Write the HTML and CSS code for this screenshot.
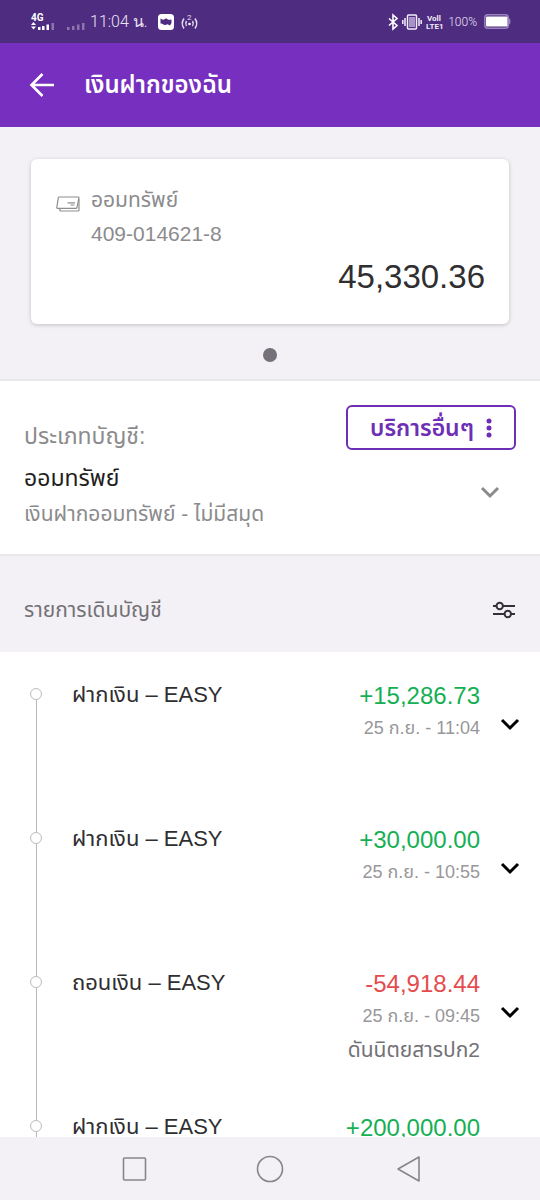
FILE: index.html
```html
<!DOCTYPE html>
<html lang="th">
<head>
<meta charset="utf-8">
<meta name="viewport" content="width=device-width, initial-scale=1">
<title>เงินฝากของฉัน</title>
<link rel="stylesheet" href="styles.css">
</head>
<body>
<div class="screen">
  <div class="status-bar">
    <div class="status-group">
      <svg class="icon" width="24" height="18" viewBox="0 0 24 18" fill="#fff">
        <text x="0" y="8" class="tiny-bold">4G</text>
        <path d="M0 12l2.500-3 2.500 3zM0 13.500l2.500 3 2.500-3z"/>
        <path d="M7 14h2.500v3H7zM11 13h2.500v4H11zM15.500 11.500H18V17h-2.500z"/>
        <path d="M20.500 10H23v7h-2.500z" opacity=".35"/>
      </svg>
      <svg class="icon signal-off" width="18" height="18" viewBox="0 0 18 18" fill="#fff" opacity=".35">
        <path d="M0 14h2.500v3H0zM5 13h2.500v4H5zM10 11.500h2.500V17H10zM15 10h2.500v7H15z"/>
      </svg>
      <span class="clock">11:04 น.</span>
      <svg class="icon" width="16" height="16" viewBox="0 0 16 16">
        <rect width="16" height="16" rx="3.500" fill="#fff"/>
        <path d="M2.500 4.500l2 1q1 .5 2-.3 1.500-1.200 3 0 1.500 1 4 .3v3.500l-1.500 2.500-2-1q-1-.5-2 .2-1.500.8-3-.5-1-1-2.500-.7z" fill="#4e2c80"/>
      </svg>
      <svg class="icon" width="17" height="18" viewBox="0 0 17 18" fill="none" stroke="#e4dcee" stroke-width="1.500">
        <path d="M3 5.500Q-.5 10.500 3 15.500M5.500 8Q4 10.500 5.500 13M14 5.500q3.500 5 0 10M11.500 8Q13 10.500 11.500 13"/>
        <circle cx="8.500" cy="11" r="1.300" fill="#fff" stroke="none"/>
        <text x="6" y="7" class="tiny">2</text>
      </svg>
    </div>
    <div class="status-group status-right">
      <svg class="icon" width="10" height="16" viewBox="0 0 10 16" fill="none" stroke="#fff" stroke-width="1.600">
        <path d="M1 4.500l8 7-4 3.500V1l4 3.500-8 7"/>
      </svg>
      <svg class="icon" width="20" height="16" viewBox="0 0 20 16" fill="none" stroke="#f4effa" stroke-width="1.500">
        <rect x="5.500" y="1" width="9" height="14" rx="1"/>
        <path d="M7 3h6v10H7z" fill="#a893c6" stroke="none"/>
        <path d="M3 4v8M.8 6v4M17 4v8M19.200 6v4"/>
      </svg>
      <svg class="icon" width="18" height="18" viewBox="0 0 18 18" fill="#f1ecf7">
        <text x="1" y="8" class="lte">Voll</text>
        <text x="0" y="16" class="lte">LTE1</text>
      </svg>
      <span class="percent">100%</span>
      <svg class="icon battery" width="27" height="15" viewBox="0 0 27 15">
        <rect x=".8" y=".8" width="23.500" height="13.400" rx="3" fill="none" stroke="#9a84bb" stroke-width="1.500"/>
        <rect x="2" y="2.500" width="21.500" height="10" rx="1" fill="#fff"/>
        <path d="M25 4.500q1.500 0 1.500 3t-1.500 3z" fill="#9a84bb"/>
      </svg>
    </div>
  </div>

  <header class="app-bar">
    <button class="icon-button" aria-label="กลับ">
      <svg width="26" height="26" viewBox="0 0 26 26" fill="none" stroke="#fff" stroke-width="2.600"><path d="M25 13H2.500M13.500 2L2.500 13l11 11"/></svg>
    </button>
    <h1 class="app-title">เงินฝากของฉัน</h1>
  </header>

  <section class="carousel">
    <article class="card">
      <svg class="card-icon" width="24" height="16" viewBox="0 0 24 16" fill="none" stroke="#8e8e90" stroke-width="1.200" stroke-linejoin="round">
        <path d="M3 1h19.200q.8 0 .7.800L21 11.500q-.2.800-1 .8H1.500q-.8 0-.7-.8L2.300 1.800Q2.400 1 3 1z"/>
        <path d="M3.500 12.500l.8 2.500H22q1 0 1-1V3M11.500 6.800h7.500M14.500 9h4"/>
      </svg>
      <div class="card-info">
        <div class="card-name">ออมทรัพย์</div>
        <div class="card-number">409-014621-8</div>
      </div>
      <div class="card-balance">45,330.36</div>
    </article>
    <span class="page-dot"></span>
  </section>

  <section class="account">
    <div class="account-head">
      <span class="account-label" id="type-label">ประเภทบัญชี:</span>
      <button class="services">
        <span>บริการอื่นๆ</span>
        <svg width="6" height="20" viewBox="0 0 6 20" fill="#6d2fb5"><circle cx="3" cy="3" r="2.500"/><circle cx="3" cy="10" r="2.500"/><circle cx="3" cy="17" r="2.500"/></svg>
      </button>
    </div>
    <button class="account-select" aria-labelledby="type-label type-value">
      <span class="account-text" id="type-value">
        <span class="account-value">ออมทรัพย์</span>
        <span class="account-detail">เงินฝากออมทรัพย์ - ไม่มีสมุด</span>
      </span>
      <svg class="account-chevron" width="20" height="14" viewBox="0 0 20 14" fill="none" stroke="#8b8b8d" stroke-width="3"><path d="M2 3l8 8 8-8"/></svg>
    </button>
  </section>

  <div class="list-head">
    <h2 class="list-title">รายการเดินบัญชี</h2>
    <button class="icon-button" aria-label="ตัวกรอง">
      <svg width="24" height="18" viewBox="0 0 24 18" fill="none" stroke="#343138" stroke-width="2"><path d="M1 5h3.500M11 5h12M1 13h11.500M19 13h4"/><circle cx="7.700" cy="5" r="3.200"/><circle cx="15.800" cy="13" r="3.200"/></svg>
    </button>
  </div>

  <ol class="transactions">
    <li class="row">
      <span class="marker"></span>
      <span class="row-title">ฝากเงิน – EASY</span>
      <div class="row-data">
        <span class="amount credit">+15,286.73</span>
        <time class="date">25 ก.ย. - 11:04</time>
      </div>
      <button class="icon-button expand" aria-label="รายละเอียด"><svg width="20" height="14" viewBox="0 0 20 14" fill="none" stroke="#000" stroke-width="3"><path d="M2 3l8 8 8-8"/></svg></button>
    </li>
    <li class="row">
      <span class="marker"></span>
      <span class="row-title">ฝากเงิน – EASY</span>
      <div class="row-data">
        <span class="amount credit">+30,000.00</span>
        <time class="date">25 ก.ย. - 10:55</time>
      </div>
      <button class="icon-button expand" aria-label="รายละเอียด"><svg width="20" height="14" viewBox="0 0 20 14" fill="none" stroke="#000" stroke-width="3"><path d="M2 3l8 8 8-8"/></svg></button>
    </li>
    <li class="row">
      <span class="marker"></span>
      <span class="row-title">ถอนเงิน – EASY</span>
      <div class="row-data">
        <span class="amount debit">-54,918.44</span>
        <time class="date">25 ก.ย. - 09:45</time>
        <span class="note">ดันนิตยสารปก2</span>
      </div>
      <button class="icon-button expand" aria-label="รายละเอียด"><svg width="20" height="14" viewBox="0 0 20 14" fill="none" stroke="#000" stroke-width="3"><path d="M2 3l8 8 8-8"/></svg></button>
    </li>
    <li class="row">
      <span class="marker"></span>
      <span class="row-title">ฝากเงิน – EASY</span>
      <div class="row-data">
        <span class="amount credit">+200,000.00</span>
      </div>
    </li>
  </ol>

  <nav class="system-nav">
    <button class="icon-button" aria-label="แอปล่าสุด"><svg width="28" height="28" viewBox="0 0 28 28" fill="none" stroke="#87858a" stroke-width="1.600"><rect x="3.500" y="3" width="22" height="22" rx="1"/></svg></button>
    <button class="icon-button" aria-label="หน้าหลัก"><svg width="28" height="28" viewBox="0 0 28 28" fill="none" stroke="#87858a" stroke-width="1.600"><circle cx="14" cy="14" r="12.500"/></svg></button>
    <button class="icon-button" aria-label="ย้อนกลับ"><svg width="28" height="28" viewBox="0 0 28 28" fill="none" stroke="#87858a" stroke-width="1.600" stroke-linejoin="round"><path d="M27 2v24L6 14z"/></svg></button>
  </nav>
</div>
</body>
</html>
```

FILE: styles.css
```css
* {
  box-sizing: border-box;
}

body {
  margin: 0;
  background: #fff;
  color: #2f2e31;
  font-family: "Liberation Sans", "Noto Sans Thai", sans-serif;
}

h1,
h2,
ol {
  margin: 0;
  padding: 0;
  font-weight: normal;
}

button {
  margin: 0;
  padding: 0;
  border: 0;
  background: none;
  color: inherit;
  font: inherit;
}

svg {
  display: block;
  flex: none;
  overflow: visible;
}

.screen {
  display: flex;
  flex-direction: column;
  height: 100vh;
  overflow: hidden;
}

.icon-button {
  display: flex;
  align-items: center;
  justify-content: center;
}

/* Status bar */
.status-bar {
  display: flex;
  flex: none;
  align-items: center;
  justify-content: space-between;
  height: 43px;
  padding: 0 29px 0 31px;
  background: #4e2c80;
  color: #e9e2f3;
  font-family: Roboto, "Liberation Sans", sans-serif;
  line-height: 24px;
}

.status-group {
  display: flex;
  align-items: center;
}

.status-right {
  gap: 4px;
}

.signal-off {
  margin-left: 12px;
}

.clock {
  margin: 0 10px 0 5px;
  font-size: 16px;
  font-weight: 300;
  white-space: nowrap;
}

.clock + .icon {
  margin: 0 7px 0 -9px;
  margin-left: 0;
}

.percent {
  margin-right: 3px;
  font-size: 12px;
  font-weight: 300;
}

.tiny {
  font-size: 8px;
  fill: #e4dcee;
  stroke: none;
}

.tiny-bold {
  font-size: 10px;
  font-weight: 700;
}

.lte {
  font-size: 8px;
  font-weight: 700;
}

/* App bar */
.app-bar {
  display: flex;
  flex: none;
  align-items: center;
  gap: 29px;
  height: 84px;
  padding: 0 29px;
  background: #762fbe;
  color: #fff;
}

.app-title {
  font-size: 24px;
  font-weight: 600;
  line-height: 36px;
}

/* Account card */
.carousel {
  display: flex;
  flex: none;
  flex-direction: column;
  align-items: center;
  gap: 24px;
  padding: 32px 31px 17px;
  border-bottom: 2px solid #e9e8ea;
  background: #f3f1f5;
}

.card {
  display: grid;
  grid-template-columns: 24px 1fr;
  column-gap: 12px;
  width: 100%;
  padding: 24px 24px 27px;
  border-radius: 6px;
  background: #fff;
  box-shadow: 0 1px 4px rgba(0, 0, 0, 0.2);
}

.card-icon {
  margin: 13px 0 0 1px;
}

.card-info {
  color: #8b8b8d;
  font-size: 21px;
  line-height: 34px;
}

.card-balance {
  grid-column: 1 / -1;
  padding-top: 6px;
  font-size: 33px;
  line-height: 40px;
  text-align: right;
}

.page-dot {
  width: 14px;
  height: 14px;
  border-radius: 50%;
  background: #757079;
}

/* Account type */
.account {
  flex: none;
  padding: 24px 24px 23px;
  border-bottom: 2px solid #e9e8ea;
}

.account-head {
  display: flex;
  justify-content: space-between;
}

.account-label {
  padding-top: 14px;
  color: #8b8b8d;
  font-size: 23px;
  line-height: 34px;
}

.services {
  display: flex;
  align-items: center;
  gap: 12px;
  height: 45px;
  padding: 0 22px;
  border: 2px solid #6d2fb5;
  border-radius: 6px;
  color: #6d2fb5;
  font-size: 23px;
  font-weight: 600;
  line-height: 34px;
}

.account-select {
  display: flex;
  align-items: center;
  justify-content: space-between;
  width: 100%;
  padding: 8px 16px 0 0;
  text-align: left;
}

.account-text {
  display: flex;
  flex-direction: column;
  font-size: 23px;
  line-height: 35px;
}

.account-value {
  color: #1f1e20;
}

.account-detail {
  color: #8b8b8d;
  font-size: 21px;
}

.account-chevron {
  margin-bottom: 8px;
}

/* Transactions */
.list-head {
  display: flex;
  flex: none;
  align-items: center;
  justify-content: space-between;
  height: 96px;
  padding: 12px 24px 0;
  background: #f3f1f5;
}

.list-title {
  color: #737176;
  font-size: 21px;
  line-height: 34px;
}

.transactions {
  flex: 1;
  min-height: 0;
  overflow: hidden;
  list-style: none;
}

.row {
  display: flex;
  position: relative;
  min-height: 144px;
  padding: 28px 20px 0 30px;
}

.row::before {
  content: "";
  position: absolute;
  top: 42px;
  bottom: -42px;
  left: 36px;
  width: 1px;
  background: #bcbcbe;
}

.marker {
  position: relative;
  flex: none;
  width: 12px;
  height: 12px;
  margin: 8px 30px 0 0;
  border: 1px solid #bcbcbe;
  border-radius: 50%;
  background: #fff;
}

.row-title {
  flex: 1;
  font-size: 22px;
  line-height: 30px;
}

.row-data {
  display: flex;
  flex-direction: column;
  align-items: flex-end;
  font-size: 18px;
  line-height: 32px;
}

.amount {
  font-size: 24px;
}

.credit {
  color: #14b053;
}

.debit {
  color: #e54b4e;
}

.date {
  color: #98979a;
}

.note {
  color: #737176;
  font-size: 21px;
  line-height: 36px;
}

.row:last-child .row-data {
  margin-right: 40px;
}

.expand {
  width: 20px;
  height: 14px;
  margin: 37px 0 0 20px;
}

/* System navigation */
.system-nav {
  display: flex;
  flex: none;
  align-items: center;
  justify-content: space-around;
  height: 63px;
  padding: 0 66px;
  background: #f3f1f5;
}
```
